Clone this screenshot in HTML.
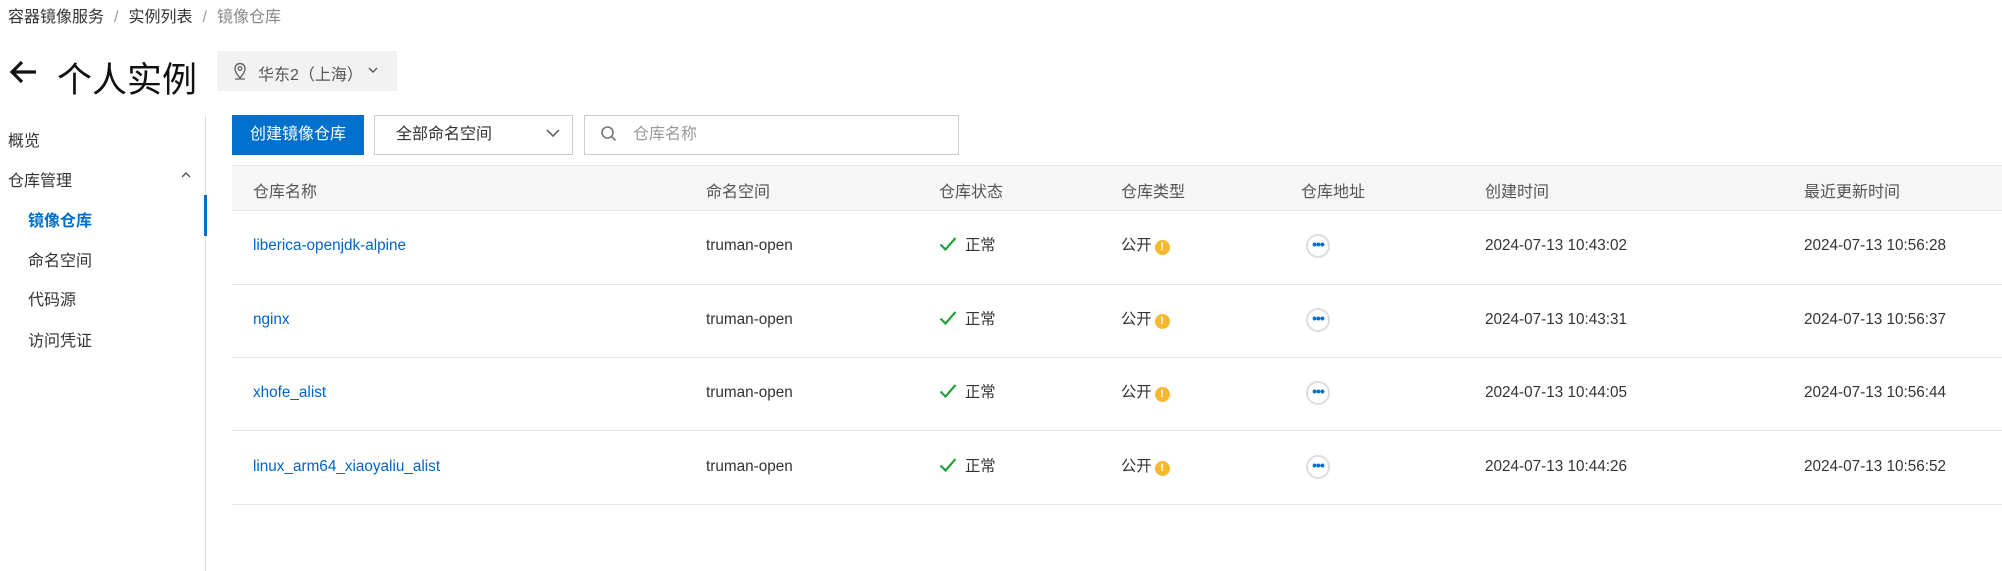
<!DOCTYPE html>
<html><head><meta charset="utf-8"><style>
*{margin:0;padding:0;box-sizing:border-box}
body{width:2002px;height:571px;background:#fff;font-family:"Liberation Sans","Noto Sans CJK SC",sans-serif;color:#333;position:relative;overflow:hidden;font-size:16px}
.a{position:absolute;white-space:nowrap}
.bc{top:3px;left:8px;font-size:16px;color:#333}
.bc span.s{color:#999;margin:0 10px}
.bc .g{color:#888}
.side{left:8px;font-size:16px;color:#333}
.vl{left:205px;top:115px;width:1px;height:456px;background:#ddd}
.act{left:204px;top:195px;width:3px;height:41px;background:#0070cc}
.btn{left:232px;top:115px;width:132px;height:40px;background:#0070cc;color:#fff;font-size:16px;line-height:40px;text-align:center}
.sel{left:374px;top:115px;width:199px;height:40px;border:1px solid #ccc;line-height:38px;padding-left:21px;font-size:16px;color:#333}
.srch{left:584px;top:115px;width:375px;height:40px;border:1px solid #ccc;line-height:38px;padding-left:48px;color:#999}
.th{left:232px;top:165px;width:1770px;height:46px;background:#f6f6f6;border-top:1px solid #e6e6e6;border-bottom:1px solid #e6e6e6}
.h{top:178px;color:#555;font-size:16px}
.rl{left:232px;width:1770px;height:1px;background:#e6e6e6}
.c{font-size:15.3px;color:#333;line-height:20px}
.lk{color:#0064c8}
.dots{width:24px;height:24px;border:2px solid #ddd;border-radius:50%;text-align:center;line-height:16px;color:#0070cc;font-size:14px;font-weight:bold;letter-spacing:-1px}
.warn{display:inline-block;width:15px;height:15px;border-radius:50%;background:#f5b82e;color:#fff;font-size:11px;line-height:15px;text-align:center;font-weight:bold;vertical-align:0px;margin-left:3px}
.ck{display:inline-block;width:18px;height:16px;vertical-align:-2px;margin-right:8px}
</style></head><body>
<div class="a bc">容器镜像服务<span class="s">/</span>实例列表<span class="s">/</span><span class="g">镜像仓库</span></div>
<svg class="a" style="left:8px;top:57px" width="30" height="30" viewBox="0 0 30 30"><path d="M28 15H4M14 5L4 15l10 10" stroke="#111" stroke-width="3.2" fill="none"/></svg>
<div class="a" style="left:57px;top:52px;font-size:35px;color:#111">个人实例</div>
<div class="a" style="left:217px;top:51px;width:180px;height:40px;background:#f2f2f2"></div>
<svg class="a" style="left:232px;top:62px" width="16" height="18" viewBox="0 0 16 18"><path d="M8 16C4 11 3 9 3 6.5a5 5 0 0110 0C13 9 12 11 8 16z" stroke="#666" stroke-width="1.4" fill="none"/><circle cx="8" cy="6.5" r="1.8" stroke="#666" stroke-width="1.3" fill="none"/><path d="M3 17h10" stroke="#666" stroke-width="1.3"/></svg>
<div class="a" style="left:258px;top:61px;font-size:16px;color:#555">华东2（上海）</div>
<svg class="a" style="left:367px;top:65px" width="12" height="10" viewBox="0 0 12 10"><path d="M2 3l4 4 4-4" stroke="#555" stroke-width="1.4" fill="none"/></svg>
<div class="a side" style="top:127px">概览</div>
<div class="a side" style="top:167px">仓库管理</div>
<svg class="a" style="left:180px;top:170px" width="12" height="10" viewBox="0 0 12 10"><path d="M2 7l4-4 4 4" stroke="#555" stroke-width="1.4" fill="none"/></svg>
<div class="a side" style="left:28px;top:207px;color:#0070cc;font-weight:bold">镜像仓库</div>
<div class="a side" style="left:28px;top:247px">命名空间</div>
<div class="a side" style="left:28px;top:286px">代码源</div>
<div class="a side" style="left:28px;top:327px">访问凭证</div>
<div class="a vl"></div><div class="a act"></div>
<div class="a btn">创建镜像仓库</div>
<div class="a sel">全部命名空间</div>
<svg class="a" style="left:545px;top:126px" width="16" height="14" viewBox="0 0 16 14"><path d="M2 4l6 6 6-6" stroke="#666" stroke-width="1.6" fill="none"/></svg>
<div class="a srch">仓库名称</div>
<svg class="a" style="left:600px;top:125px" width="18" height="18" viewBox="0 0 18 18"><circle cx="7.5" cy="7.5" r="5.5" stroke="#777" stroke-width="1.6" fill="none"/><path d="M11.5 11.5l4 4" stroke="#777" stroke-width="1.6"/></svg>
<div class="a th"></div>
<div class="a h" style="left:253px">仓库名称</div>
<div class="a h" style="left:706px">命名空间</div>
<div class="a h" style="left:939px">仓库状态</div>
<div class="a h" style="left:1121px">仓库类型</div>
<div class="a h" style="left:1301px">仓库地址</div>
<div class="a h" style="left:1485px">创建时间</div>
<div class="a h" style="left:1804px">最近更新时间</div>

<div class="a rl" style="top:284px"></div>
<div class="a rl" style="top:357px"></div>
<div class="a rl" style="top:430px"></div>
<div class="a rl" style="top:504px"></div>

<div class="a c lk" style="left:253px;top:236px">liberica-openjdk-alpine</div>
<div class="a c lk" style="left:253px;top:310px">nginx</div>
<div class="a c lk" style="left:253px;top:383px">xhofe_alist</div>
<div class="a c lk" style="left:253px;top:457px">linux_arm64_xiaoyaliu_alist</div>

<div class="a c" style="left:706px;top:236px">truman-open</div>
<div class="a c" style="left:706px;top:310px">truman-open</div>
<div class="a c" style="left:706px;top:383px">truman-open</div>
<div class="a c" style="left:706px;top:457px">truman-open</div>

<div class="a c" style="left:939px;top:236px"><svg class="ck" viewBox="0 0 18 16"><path d="M1.5 8.5l5 5L16.5 2" stroke="#23a23a" stroke-width="2.2" fill="none"/></svg>正常</div>
<div class="a c" style="left:939px;top:310px"><svg class="ck" viewBox="0 0 18 16"><path d="M1.5 8.5l5 5L16.5 2" stroke="#23a23a" stroke-width="2.2" fill="none"/></svg>正常</div>
<div class="a c" style="left:939px;top:383px"><svg class="ck" viewBox="0 0 18 16"><path d="M1.5 8.5l5 5L16.5 2" stroke="#23a23a" stroke-width="2.2" fill="none"/></svg>正常</div>
<div class="a c" style="left:939px;top:457px"><svg class="ck" viewBox="0 0 18 16"><path d="M1.5 8.5l5 5L16.5 2" stroke="#23a23a" stroke-width="2.2" fill="none"/></svg>正常</div>

<div class="a c" style="left:1121px;top:236px">公开<span class="warn">!</span></div>
<div class="a c" style="left:1121px;top:310px">公开<span class="warn">!</span></div>
<div class="a c" style="left:1121px;top:383px">公开<span class="warn">!</span></div>
<div class="a c" style="left:1121px;top:457px">公开<span class="warn">!</span></div>

<div class="a dots" style="left:1306px;top:234px">•••</div>
<div class="a dots" style="left:1306px;top:308px">•••</div>
<div class="a dots" style="left:1306px;top:381px">•••</div>
<div class="a dots" style="left:1306px;top:455px">•••</div>

<div class="a c" style="left:1485px;top:236px">2024-07-13 10:43:02</div>
<div class="a c" style="left:1485px;top:310px">2024-07-13 10:43:31</div>
<div class="a c" style="left:1485px;top:383px">2024-07-13 10:44:05</div>
<div class="a c" style="left:1485px;top:457px">2024-07-13 10:44:26</div>

<div class="a c" style="left:1804px;top:236px">2024-07-13 10:56:28</div>
<div class="a c" style="left:1804px;top:310px">2024-07-13 10:56:37</div>
<div class="a c" style="left:1804px;top:383px">2024-07-13 10:56:44</div>
<div class="a c" style="left:1804px;top:457px">2024-07-13 10:56:52</div>
</body></html>
